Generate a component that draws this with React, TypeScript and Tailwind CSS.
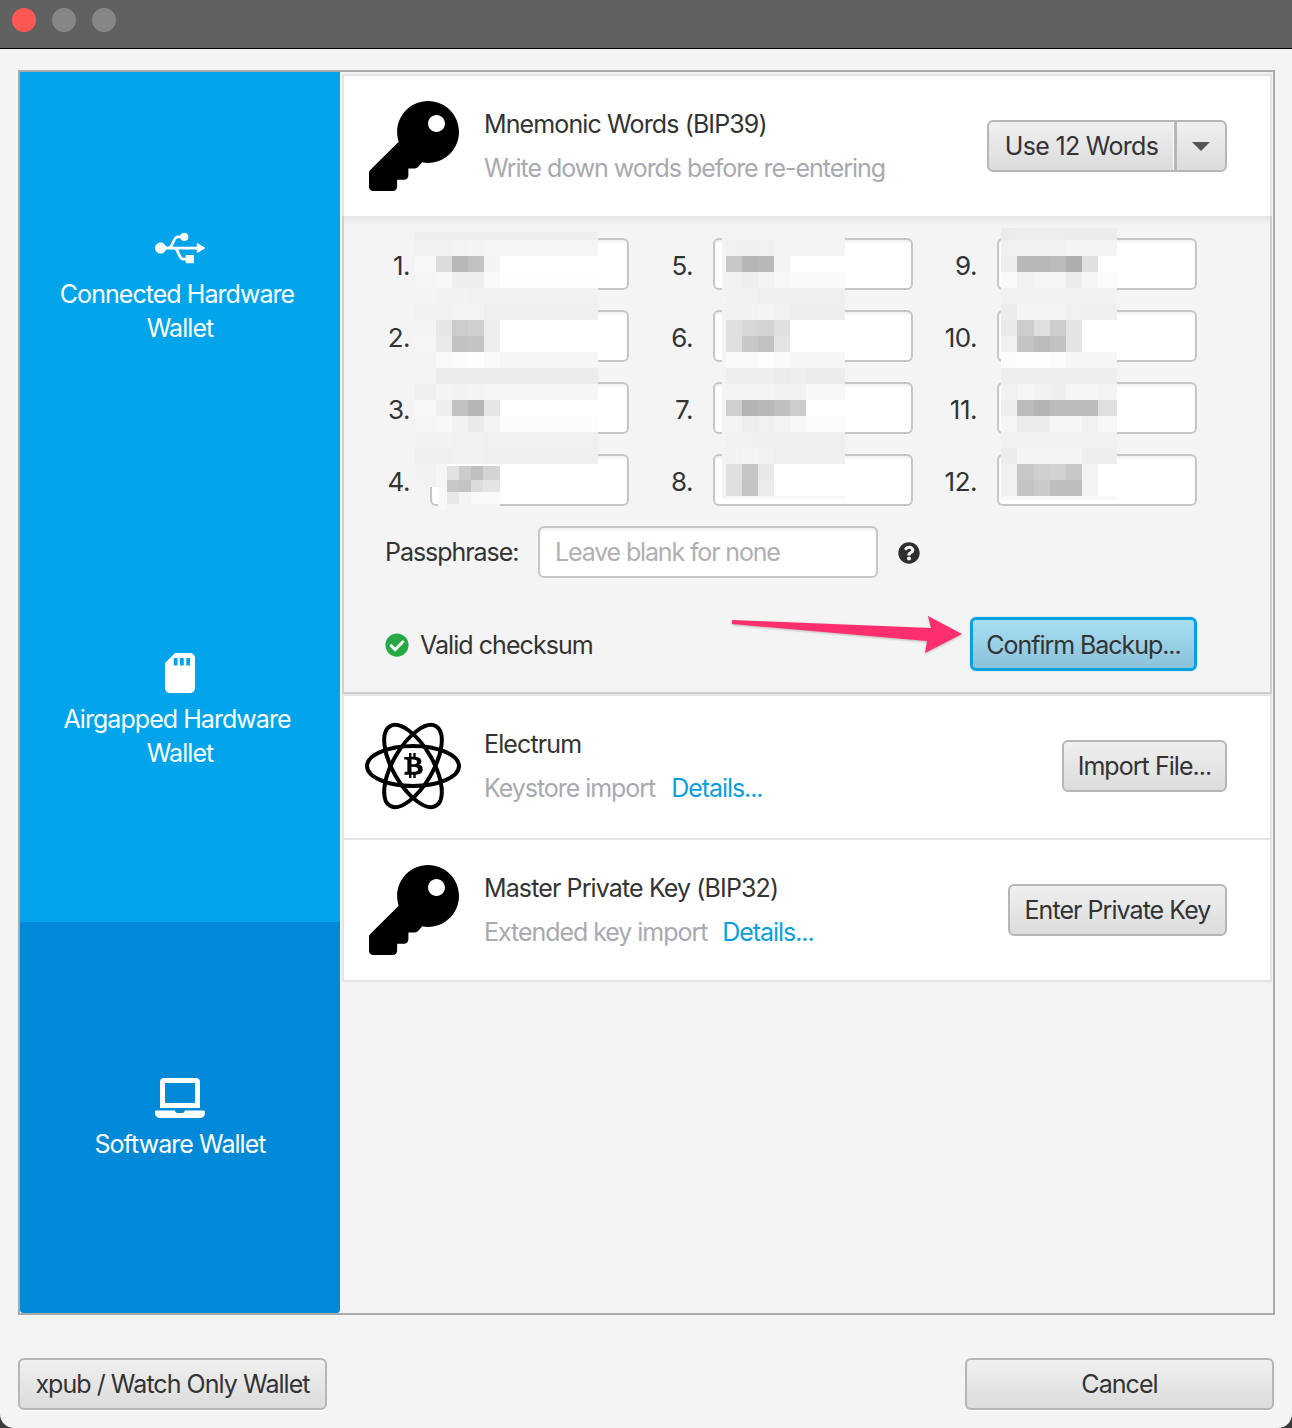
import type { ReactNode } from "react";
import { FaBtc, FaCheckCircle, FaKey, FaLaptop, FaQuestionCircle, FaSdCard, FaUsb } from "react-icons/fa";

type MosaicProps = { left: number; top: number; cols: number[]; rows: [number, string][] };

// pixelated patches that hide the seed words
function Mosaic({ left, top, cols, rows }: MosaicProps) {
  return (
    <div className="absolute" style={{ left, top }}>
      {rows.map(([h, vals], i) => (
        <div key={i} className="flex" style={{ height: h }}>
          {vals.split(" ").map((v, j) => (
            <div key={j} style={{ width: cols[j], height: h, backgroundColor: `#${v}${v}${v}` }} />
          ))}
        </div>
      ))}
    </div>
  );
}

const col1: [number, string][] = [
  [8, "ee ee ee ee ee ee"],
  [16, "f1 f1 f3 f4 f5 f5"],
  [16, "f8 dc b8 c2 f4 ff"],
  [16, "f5 f8 ee ee fa fe"],
  [16, "f3 f2 f2 f1 f1 f1"],
  [16, "f1 f1 f3 f3 ef ef"],
  [16, "f4 e6 cc d0 ee ff"],
  [16, "f6 ea c2 c4 ee ff"],
  [16, "f3 fa fc fe fa f6"],
  [16, "f4 ec ec ec ec ec"],
  [16, "ef f4 f2 f4 f6 f6"],
  [16, "f7 ee c2 b6 e6 ff"],
  [16, "f5 f8 f2 ea f4 fc"],
  [16, "f2 f2 f1 f1 f0 f0"],
  [16, "ef ef f2 f2 ef ef"],
];
const col1b: [number, string][] = [
  [14, "e2 cc c0 d4"],
  [12, "c8 c4 dc e4"],
  [12, "e8 f4 fa fa"],
  [6, "f4 f4 f4 f4"],
];
const col2: [number, string][] = [
  [4, "f2 f2 f2 f2 f2 f2 f2"],
  [16, "f0 ef f0 f4 f4 f4 f4"],
  [16, "c8 b6 b8 f4 ff ff ff"],
  [16, "f2 ee f3 f8 fa fa fa"],
  [16, "f1 f1 ef ef ef ef ef"],
  [16, "f2 f2 f4 f2 ee ee ee"],
  [16, "e0 d8 d4 e0 ff ff ff"],
  [16, "e0 c8 c2 e4 ff ff ff"],
  [16, "fa fa fd fa f6 f6 f6"],
  [16, "ee ee ee ec ee ec ec"],
  [16, "f4 f4 f4 f1 f1 f7 f7"],
  [16, "cf b4 b8 c0 cc ff ff"],
  [16, "f4 ee f0 f3 f8 fb fb"],
  [16, "f0 f0 ef ef ef ef ef"],
  [16, "f2 f4 f1 ef ef ef ef"],
  [16, "e0 c6 e8 ff ff ff ff"],
  [16, "e0 c4 ec ff ff ff ff"],
  [3, "f8 f8 f8 f8 f8 f8 f8"],
];
const col3: [number, string][] = [
  [12, "eb ed ed ed ec ec ec"],
  [16, "f0 f0 f0 f0 f4 f4 f4"],
  [16, "ee b8 b8 bc ae e0 ff"],
  [16, "fa f2 f5 f6 ec f6 fb"],
  [16, "f1 f1 f1 f1 f1 f2 f2"],
  [16, "ec f4 f4 f4 f0 ef ef"],
  [16, "ea cc de cc e4 ff ff"],
  [16, "f0 c4 bc c2 e4 ff ff"],
  [16, "fc fd fd fb f6 f6 f6"],
  [16, "ee ee ee ee ee ee ee"],
  [16, "f2 f6 f2 ee f6 f6 f4"],
  [16, "ee bc b4 bc bc bc de"],
  [16, "f6 ec ec f6 f6 f0 f8"],
  [16, "f1 f1 f1 f1 f1 f1 f1"],
  [16, "ec f4 f4 f4 f4 ee ee"],
  [16, "f0 c8 d0 d2 c8 f4 ff"],
  [16, "f0 c4 ca be be f4 ff"],
  [4, "f8 f8 f8 f8 f8 f8 f8"],
];

function Button({ children, className = "" }: { children: ReactNode; className?: string }) {
  return (
    <div
      className={`flex h-[52px] items-center justify-center rounded-md border-2 border-[#b6b6b6] bg-linear-to-b from-[#f0f0f0] to-[#dcdcdc] pt-[2px] shadow-[0_1px_0_#fff] text-[#333] ${className}`}
    >
      {children}
    </div>
  );
}

function SideItem({ icon, lines, className }: { icon: ReactNode; lines: string[]; className: string }) {
  return (
    <div className={`flex flex-col items-center justify-center pt-[3px] text-white ${className}`}>
      <div className="flex h-10 items-center justify-center">{icon}</div>
      <div className="mt-[9px] text-center leading-[34px]">
        {lines.map((l, i) => (
          <div key={l} className={i === 0 && lines.length > 1 ? "pr-[6px]" : ""}>
            {l}
          </div>
        ))}
      </div>
    </div>
  );
}

function Heading({ title, children }: { title: string; children: ReactNode }) {
  return (
    <div className="flex-1 leading-[44px]">
      <div className="tracking-[-0.88px] text-[#333]">{title}</div>
      <div className="tracking-[-1.05px] text-[#a9a9b0]">{children}</div>
    </div>
  );
}

function AtomIcon() {
  return (
    <svg width="98" height="90" viewBox="0 0 98 90" fill="none" stroke="#000" strokeWidth="4">
      <ellipse cx="49" cy="45" rx="46" ry="20" />
      <ellipse cx="49" cy="45" rx="46" ry="20" transform="rotate(60 49 45)" />
      <ellipse cx="49" cy="45" rx="46" ry="20" transform="rotate(120 49 45)" />
      <FaBtc x="37" y="32" width="28" height="28" fill="#000" stroke="none" />
    </svg>
  );
}

const words = [
  ["1.", "5.", "9."],
  ["2.", "6.", "10."],
  ["3.", "7.", "11."],
  ["4.", "8.", "12."],
];

export default function App() {
  return (
    <div className="relative h-[1428px] w-[1292px] overflow-hidden bg-[#3a3a3a] font-['Inter',sans-serif] text-[25px] tracking-[-0.95px]">
      <div className="flex h-full flex-col overflow-hidden rounded-b-[14px] bg-[#f4f4f4]">
        {/* title bar */}
        <div className="flex h-[49px] shrink-0 items-start gap-4 border-b border-black bg-[#616161] pl-3 pt-2">
          <div className="h-6 w-6 rounded-full bg-[#fc5753]" />
          <div className="h-6 w-6 rounded-full bg-[#868686]" />
          <div className="h-6 w-6 rounded-full bg-[#868686]" />
        </div>

        {/* main box */}
        <div className="ml-[18px] mt-[21px] flex h-[1245px] w-[1257px] border-2 border-[#ababab]">
          <div className="flex w-80 shrink-0 flex-col overflow-hidden rounded-b-[4px] bg-[#00a4ea]">
            <SideItem className="h-[425px]" icon={<FaUsb size={50} />} lines={["Connected Hardware", "Wallet"]} />
            <SideItem className="h-[425px]" icon={<FaSdCard size={40} />} lines={["Airgapped Hardware", "Wallet"]} />
            <SideItem className="flex-1 bg-[#0089d6]" icon={<FaLaptop size={50} />} lines={["Software Wallet"]} />
          </div>

          <div className="flex-1 pl-[2px] pr-[1px] pt-[2px]">
            <div className="flex h-[142px] items-center border-x-2 border-t-2 border-[#e4e4e4] bg-white pl-[25px] pr-[43px]">
              <FaKey size={90} className="mr-[25px] shrink-0 text-black" />
              <Heading title="Mnemonic Words (BIP39)">Write down words before re-entering</Heading>
              <div className="flex h-[52px] w-60 rounded-md border-2 border-[#b6b6b6] bg-linear-to-b from-[#f0f0f0] to-[#dcdcdc] text-[#333]">
                <div className="flex w-[188px] items-center justify-center border-r-[3px] border-[#b6b6b6] pt-[2px] tracking-[-0.7px] shadow-[inset_-1px_0_0_#fff]">
                  Use 12 Words
                </div>
                <div className="flex flex-1 items-center justify-center">
                  <div className="h-0 w-0 border-x-[9px] border-t-[9px] border-x-transparent border-t-[#555]" />
                </div>
              </div>
            </div>

            {/* word form */}
            <div className="h-[478px] border-x-2 border-b-2 border-[#cfcfcf] bg-linear-to-b from-[#e6e6e6] via-[#f4f4f4] via-[2%] to-[#f4f4f4] pt-[22px]">
              <div className="grid grid-cols-[86px_199px_84px_200px_84px_200px] gap-y-5 text-[#333]">
                {words.flat().map((_, i) => {
                  const row = Math.floor(i / 3);
                  const col = i % 3;
                  return (
                    <div key={i} className="contents">
                      <div className="flex h-[52px] items-center justify-end pr-5 pt-[2px] text-[26px] tracking-[-0.5px]">
                        {words[row][col]}
                      </div>
                      <div className="h-[52px] rounded-md border-2 border-[#c6c6c6] bg-white shadow-[inset_0_2px_3px_rgba(0,0,0,0.06)]" />
                    </div>
                  );
                })}
              </div>

              <div className="mt-5 flex h-[52px] items-center pl-[42px] text-[#333]">
                <span className="-ml-px w-[153px] pt-[2px] tracking-[-1.05px]">Passphrase:</span>
                <div className="flex h-[52px] w-[340px] items-center rounded-md border-2 border-[#c6c6c6] bg-white pl-[15px] pt-[2px] tracking-[-1.15px] text-[#b0b0b0] shadow-[inset_0_2px_3px_rgba(0,0,0,0.06)]">
                  Leave blank for none
                </div>
                <FaQuestionCircle size={22} className="ml-[20px] mt-[2px] text-[#2e2e2e]" />
              </div>

              <div className="mt-[39px] flex h-[54px] items-center pl-[41px] pr-[73px] text-[#333]">
                <FaCheckCircle size={24} className="mt-[2px] text-[#27a844]" />
                <span className="ml-[11px] flex-1 pt-[4px]">Valid checksum</span>
                <div className="flex h-[54px] w-[227px] items-center justify-center rounded-md border-[3px] border-[#00a3e0] bg-linear-to-b from-[#a8def2] to-[#8cc2da] pt-[4px] tracking-[-1.05px] shadow-[0_0_2px_#a0dcf0]">
                  Confirm Backup...
                </div>
              </div>
            </div>

            <div className="flex h-[146px] items-center border-2 border-[#e4e4e4] bg-white pb-[2px] pl-[20px] pr-[43px]">
              <div className="mr-[22px] w-[98px] shrink-0">
                <AtomIcon />
              </div>
              <Heading title="Electrum">
                Keystore import<span className="ml-4 text-[#0a9fdb]">Details...</span>
              </Heading>
              <Button className="w-[165px]">Import File...</Button>
            </div>

            <div className="flex h-[142px] items-center border-x-2 border-b-2 border-[#e4e4e4] bg-white pl-[25px] pr-[43px]">
              <FaKey size={90} className="mr-[25px] shrink-0 text-black" />
              <Heading title="Master Private Key (BIP32)">
                Extended key import<span className="ml-[15px] text-[#0a9fdb]">Details...</span>
              </Heading>
              <Button className="w-[219px]">Enter Private Key</Button>
            </div>
          </div>
        </div>

        {/* footer buttons */}
        <div className="mx-[18px] mt-[43px] flex justify-between">
          <Button className="w-[309px]">xpub / Watch Only Wallet</Button>
          <Button className="w-[309px]">Cancel</Button>
        </div>
      </div>

      <Mosaic left={415} top={232} cols={[21, 16, 16, 16, 16, 98]} rows={col1} />
      <Mosaic left={415} top={464} cols={[21, 11]} rows={[[23, "f2 f6"]]} />
      <Mosaic left={438} top={487} cols={[9]} rows={[[23, "f8"]]} />
      <Mosaic left={447} top={466} cols={[12, 12, 12, 17]} rows={col1b} />
      <Mosaic left={722} top={236} cols={[4]} rows={[[263, "f4"]]} />
      <Mosaic left={726} top={236} cols={[16, 16, 16, 16, 16, 16, 23]} rows={col2} />
      <Mosaic left={1001} top={228} cols={[16, 17, 16, 16, 16, 16, 19]} rows={col3} />

      {/* annotation arrow */}
      <svg className="absolute left-[725px] top-[610px]" width="245" height="50" viewBox="0 0 245 50">
        <polygon
          points="7,10 206,18 203,6 237,24 200,43 202,31 7,14"
          fill="#ff2e6e"
          style={{ filter: "drop-shadow(0 1px 1px rgba(0,0,0,0.25))" }}
        />
      </svg>
    </div>
  );
}
